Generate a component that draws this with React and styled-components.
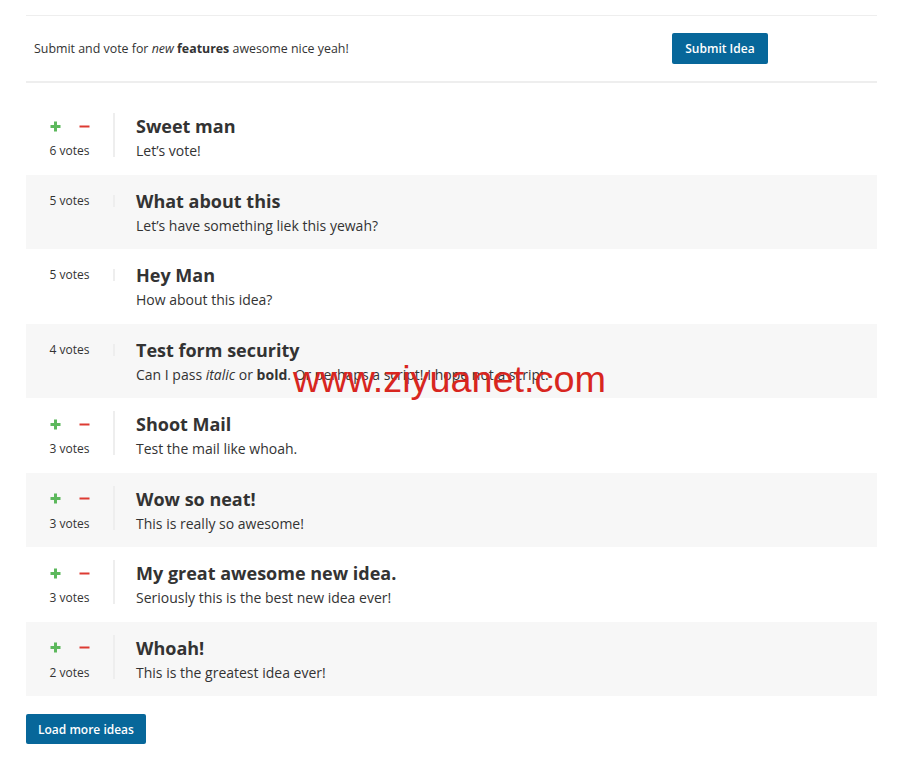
import React from "react";
import styled, { createGlobalStyle } from "styled-components";

const ideas = [
  { title: "Sweet man", body: "Let’s vote!", votes: 6, canVote: true },
  { title: "What about this", body: "Let’s have something liek this yewah?", votes: 5 },
  { title: "Hey Man", body: "How about this idea?", votes: 5 },
  {
    title: "Test form security",
    body: (
      <>
        Can I pass <em>italic</em> or <strong>bold</strong>. Or perhaps a script! I hope not a script.
      </>
    ),
    votes: 4,
  },
  { title: "Shoot Mail", body: "Test the mail like whoah.", votes: 3, canVote: true },
  { title: "Wow so neat!", body: "This is really so awesome!", votes: 3, canVote: true },
  { title: "My great awesome new idea.", body: "Seriously this is the best new idea ever!", votes: 3, canVote: true },
  { title: "Whoah!", body: "This is the greatest idea ever!", votes: 2, canVote: true },
];

const PlusIcon = () => (
  <svg width="11" height="11" viewBox="0 0 11 11">
    <path d="M5.5 0.5v10M0.5 5.5h10" stroke="#5cb85c" strokeWidth="3" />
  </svg>
);

const MinusIcon = () => (
  <svg width="11" height="11" viewBox="0 0 11 11">
    <path d="M0.5 5.5h10" stroke="#dd3b32" strokeWidth="2" />
  </svg>
);

const App = () => {
  return (
    <Page>
      <GlobalStyle />
      <Header>
        <Intro>
          Submit and vote for <em>new</em> <strong>features</strong> awesome nice yeah!
        </Intro>
        <div>
          <Button>Submit Idea</Button>
        </div>
      </Header>

      <IdeaList>
        {ideas.map((idea, i) => (
          <IdeaRow key={i} $shaded={i % 2 === 1}>
            <VoteCol $hasButtons={idea.canVote}>
              {idea.canVote && (
                <VoteButtons>
                  <VoteButton aria-label="Vote up"><PlusIcon /></VoteButton>
                  <VoteButton aria-label="Vote down"><MinusIcon /></VoteButton>
                </VoteButtons>
              )}
              <VoteCount>{idea.votes} votes</VoteCount>
            </VoteCol>
            <IdeaBody>
              <IdeaTitle>{idea.title}</IdeaTitle>
              <IdeaText>{idea.body}</IdeaText>
            </IdeaBody>
          </IdeaRow>
        ))}
      </IdeaList>

      <Footer>
        <Button>Load more ideas</Button>
      </Footer>

      <Watermark>www.ziyuanet.com</Watermark>
    </Page>
  );
};

export default App;

const GlobalStyle = createGlobalStyle`
  body {
    margin: 0;
    background: #fff;
    font-family: "Open Sans", "Liberation Sans", sans-serif;
    color: #333;
  }
`;

const Page = styled.div`
  position: relative;
  margin: 0 23px 0 26px;
  padding-top: 15px;
`;

const Header = styled.div`
  display: grid;
  grid-template-columns: 3fr 1fr;
  align-items: center;
  height: 65px;
  border-top: 1px solid #eee;
  border-bottom: 2px solid #eee;

  & > * {
    padding-left: 8px;
  }
`;

const Intro = styled.p`
  margin: 0;
  font-size: 12.4px;
  line-height: 18px;
  color: #333;
`;

const Button = styled.button`
  display: inline-block;
  height: 31px;
  padding: 0 13px;
  border: none;
  border-radius: 2px;
  background: #07679a;
  color: #fff;
  font-family: "Open Sans", "Liberation Sans", sans-serif;
  font-size: 12px;
  font-weight: 600;
  cursor: pointer;
`;

const IdeaList = styled.div`
  margin-top: 17px;
`;

const IdeaRow = styled.div`
  display: flex;
  align-items: flex-start;
  padding: 13px 0 11.5px;
  background: ${(p) => (p.$shaded ? "#f7f7f7" : "#fff")};
`;

const VoteCol = styled.div`
  flex-shrink: 0;
  box-sizing: border-box;
  width: 89px;
  margin-top: ${(p) => (p.$hasButtons ? "0" : "7px")};
  border-right: 2px solid #eee;
  text-align: center;
`;

const VoteButtons = styled.div`
  display: flex;
  justify-content: center;
  align-items: center;
  gap: 18px;
  height: 26px;
  margin-bottom: 6px;
`;

const VoteButton = styled.button`
  display: flex;
  padding: 0;
  border: none;
  background: none;
  cursor: pointer;
`;

const VoteCount = styled.div`
  font-size: 12px;
  line-height: 12px;
  color: #333;
`;

const IdeaBody = styled.div`
  margin-left: 21px;
`;

const IdeaTitle = styled.h3`
  margin: 0;
  font-size: 18px;
  font-weight: 700;
  line-height: 26px;
  color: #333;
`;

const IdeaText = styled.p`
  margin: 0;
  font-size: 14px;
  line-height: 24px;
  color: #333;
`;

const Footer = styled.div`
  margin-top: 18px;
  padding-bottom: 24px;

  ${Button} {
    height: 30px;
    padding: 0 12px;
  }
`;

const Watermark = styled.div`
  position: absolute;
  left: 267px;
  top: 361px;
  font-family: "Liberation Sans", Arial, sans-serif;
  font-size: 37.8px;
  line-height: 1;
  color: #d8261f;
  pointer-events: none;
`;
